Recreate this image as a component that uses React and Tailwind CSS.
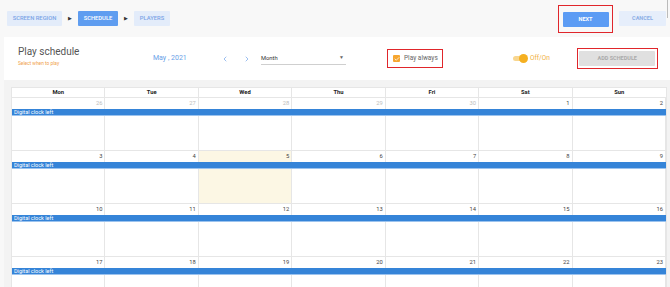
import { ChevronLeft, ChevronRight, Check } from 'lucide-react'

const days = ['Mon', 'Tue', 'Wed', 'Thu', 'Fri', 'Sat', 'Sun']

const weeks = [
  [[26, true], [27, true], [28, true], [29, true], [30, true], [1], [2]],
  [[3], [4], [5, false, true], [6], [7], [8], [9]],
  [[10], [11], [12], [13], [14], [15], [16]],
  [[17], [18], [19], [20], [21], [22], [23]],
]

const Crumb = ({ label, active, w }) => (
  <div
    className={`h-[15px] flex items-center justify-center rounded-[1px] text-[5.8px] font-medium ${
      active ? 'bg-[#5f9df0] text-white' : 'bg-[#e3ecfa] text-[#7aa3e6]'
    } ${w}`}
  >
    {label}
  </div>
)

const Caret = () => <div className="w-[16px] text-center text-[5px] text-[#333]">▶</div>

// one calendar week
const Week = ({ cells }) => (
  <div className="relative h-[53px] grid grid-cols-7 border-t border-[#e6e6e6]">
    {cells.map(([n, other, today], i) => (
      <div
        key={i}
        className={`border-r border-[#e6e6e6] last:border-r-0 text-right pr-[2px] pt-[2px] text-[5.8px] leading-[7px] ${
          today ? 'bg-[#fcf7e4]' : ''
        } ${other ? 'text-[#bdbdbd]' : 'text-[#444]'}`}
      >
        {n}
      </div>
    ))}
    <div className="absolute left-0 right-0 top-[11px] h-[7px] bg-[#3584d8] border-b border-[#9cc3ee] flex items-center pl-[2px] text-[5.5px] text-white">
      Digital clock left
    </div>
  </div>
)

export default function App() {
  return (
    <div className="w-[670px] h-[287px] overflow-hidden bg-[#f8f8f8] font-['Roboto',sans-serif]">
      {/* top bar */}
      <div className="relative h-[37px] flex items-center pl-[7px]">
        <Crumb label="SCREEN REGION" w="w-[55px]" />
        <Caret />
        <Crumb label="SCHEDULE" active w="w-[40px]" />
        <Caret />
        <Crumb label="PLAYERS" w="w-[36px]" />
        <div className="ml-auto mr-[4px] flex items-center">
          <div className="w-[55px] h-[28px] border border-[#e0262b] flex items-center justify-center pt-[1px]">
            <div className="w-[46px] h-[15px] bg-[#5c9cf4] rounded-[1px] flex items-center justify-center text-[5.5px] font-bold text-white">
              NEXT
            </div>
          </div>
          <div className="ml-[6px] w-[47px] h-[15px] bg-[#e6eefb] rounded-[1px] flex items-center justify-center text-[5.5px] font-bold text-[#8caee6]">
            CANCEL
          </div>
        </div>
        <div className="absolute right-[2px] top-0 w-[1px] h-[18px] bg-[#bbbbbb]" />
      </div>

      {/* header card */}
      <div className="ml-[4px] h-[43px] bg-white flex items-center">
        <div className="w-[149px] pl-[14px] mb-[3px]">
          <div className="text-[10px] leading-[12px] text-[#555]">Play schedule</div>
          <div className="mt-[2px] text-[4.8px] text-[#f0a04b]">Select when to play</div>
        </div>
        <div className="w-[61px] text-[7px] text-[#6a9fe8]">May , 2021</div>
        <div className="w-[22px] flex justify-center text-[#6a9fe8]">
          <ChevronLeft size={8} strokeWidth={2} />
        </div>
        <div className="w-[22px] flex justify-center text-[#6a9fe8]">
          <ChevronRight size={8} strokeWidth={2} />
        </div>
        <div className="ml-[3px] w-[85px] h-[12px] border-b border-[#cfcfcf] flex items-center justify-between text-[5.8px] text-[#333] pr-[2px]">
          <span>Month</span>
          <span className="text-[5px] text-[#666]">▼</span>
        </div>
        <div className="ml-[41px] w-[56px] h-[19px] border border-[#e0262b] flex items-center pl-[5px]">
          <div className="w-[7px] h-[7px] bg-[#f6a630] rounded-[1px] flex items-center justify-center text-white">
            <Check size={6} strokeWidth={3} />
          </div>
          <span className="ml-[4px] text-[6.5px] text-[#666]">Play always</span>
        </div>
        <div className="ml-[70px] flex items-center">
          <div className="relative w-[13px] h-[5px] rounded-full bg-[#f8d68f]">
            <div className="absolute right-[-2px] top-[-2px] w-[9px] h-[9px] rounded-full bg-[#f5b021]" />
          </div>
          <span className="ml-[4px] text-[6.5px] text-[#f0b03c]">Off/On</span>
        </div>
        <div className="ml-[27px] w-[81px] h-[21px] border border-[#e0262b] flex items-center justify-center">
          <div className="w-[76px] h-[15px] bg-[#e0e0e0] rounded-[1px] flex items-center justify-center text-[5.5px] font-bold text-[#ababab]">
            ADD SCHEDULE
          </div>
        </div>
      </div>

      {/* calendar */}
      <div className="ml-[4px] bg-[#f3f3f3] pt-[7px] pl-[7px] h-[207px]">
        <div className="w-[656px] bg-white border-l border-r border-t border-[#e6e6e6]">
          <div className="grid grid-cols-7 h-[9px]">
            {days.map((d) => (
              <div
                key={d}
                className="border-r border-[#e6e6e6] last:border-r-0 flex items-center justify-center text-[5.8px] font-bold text-[#222]"
              >
                {d}
              </div>
            ))}
          </div>
          {weeks.map((w, i) => (
            <Week key={i} cells={w} />
          ))}
        </div>
      </div>
    </div>
  )
}
